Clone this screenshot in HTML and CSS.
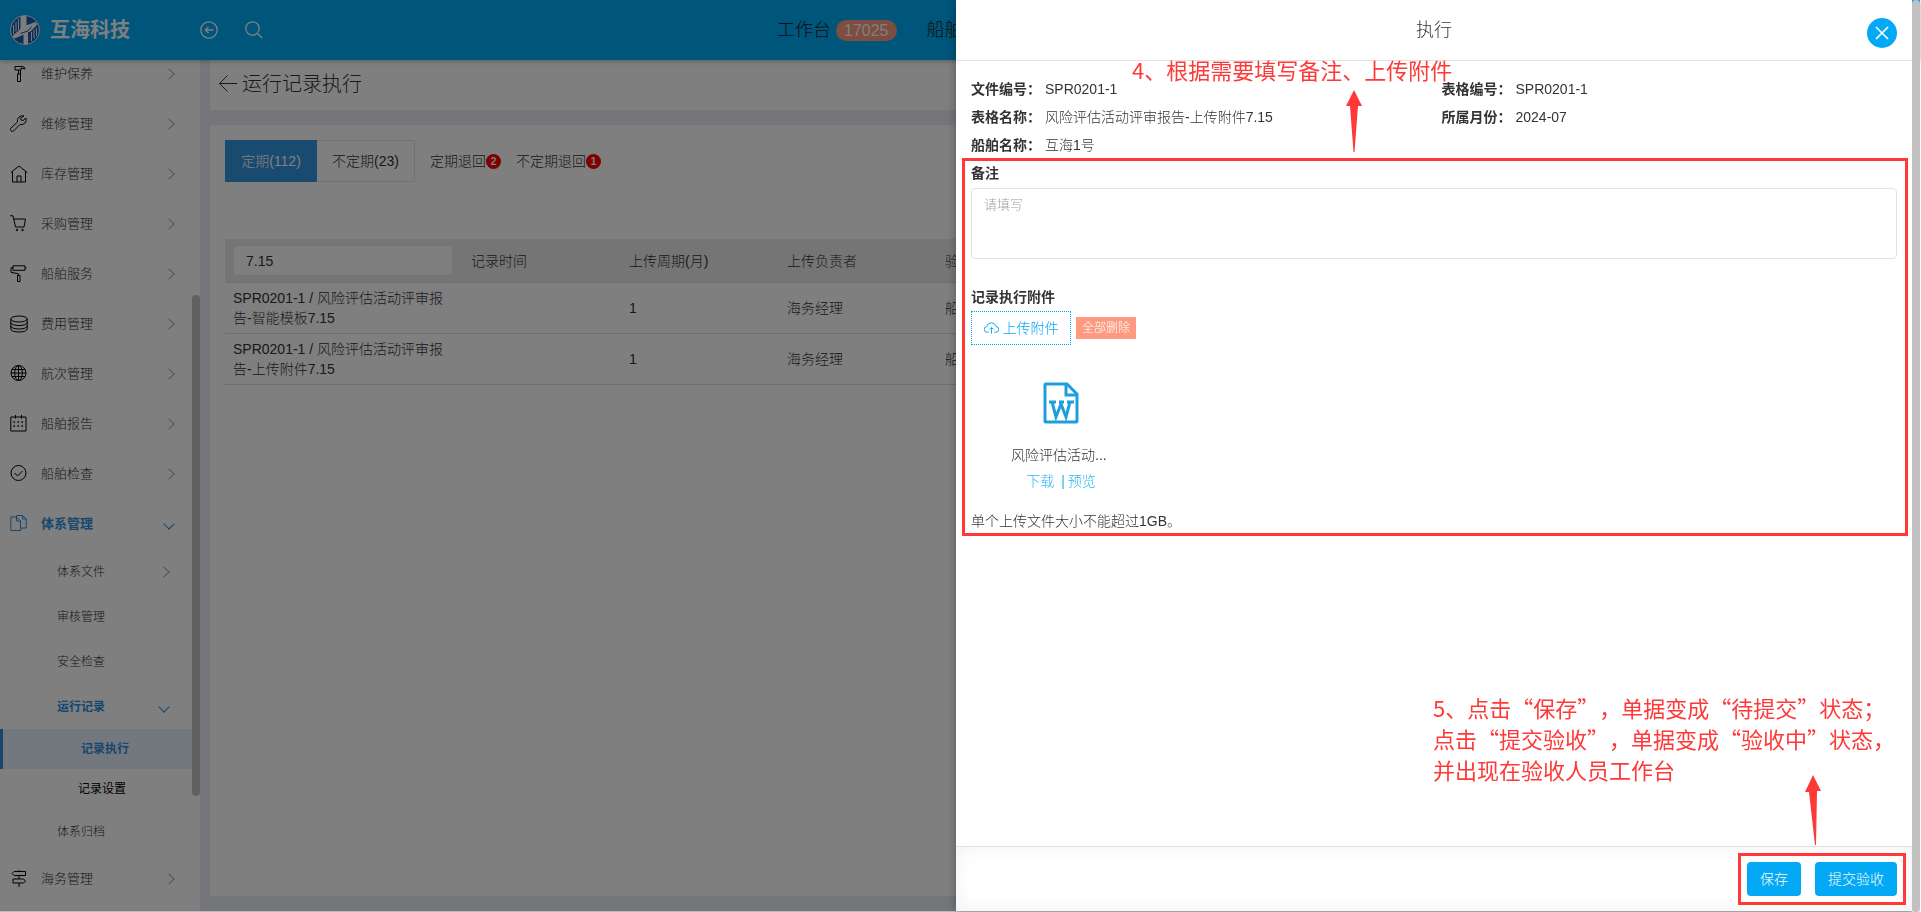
FILE: index.html
```html
<!DOCTYPE html>
<html lang="zh-CN">
<head>
<meta charset="utf-8">
<title>运行记录执行</title>
<link rel="stylesheet" href="styles.css">
</head>
<body>
<div class="app">
  <header class="topbar">
    <div class="brand">
      <svg class="brand-logo" viewBox="0 0 30 30" aria-hidden="true">
        <circle cx="15" cy="15" r="14.500" fill="#1c5cae" stroke="#e8f0f8"/>
        <path d="M11 1.500h5V11l9.500-3.500 1.500 2-7 7h-2.500V28.500H14V19l-9.500 4-1.500-2 8-7z" fill="#f4f8fc"/>
        <path d="M3.500 10v9M6 7v9.500M8.500 4v11M21.500 17v9M24 15v8.500M26.500 13v8" stroke="#e8f0f8"/>
        <path d="M10.500 18.500l7.500-2.500 3.500-4.500" stroke="#1c5cae"/>
      </svg>
      <span class="brand-name">互海科技</span>
    </div>
    <button class="icon-btn" aria-label="返回">
      <svg viewBox="0 0 18 18"><circle cx="9" cy="9" r="8.200"/><path d="M13.500 9h-8M8.500 6l-3.200 3 3.200 3"/></svg>
    </button>
    <button class="icon-btn" aria-label="搜索">
      <svg viewBox="0 0 18 18"><circle cx="7.500" cy="7.500" r="6.700"/><path d="M12.300 12.300l5 5"/></svg>
    </button>
    <nav class="topnav">
      <a href="#">工作台 <span class="count">17025</span></a>
      <a href="#">船舶</a>
    </nav>
  </header>

  <div class="workspace">
    <aside class="sidebar">
      <ul class="menu">
        <li><a href="#"><svg viewBox="0 0 18 18"><path d="M5 1.500h7.500q2 0 2.500 2.500l-4-1v2H5zM8.500 5v4M10.500 5v4M7.500 9h3v7.500h-3z"/></svg>维护保养<i class="arrow"></i></a></li>
        <li><a href="#"><svg viewBox="0 0 18 18"><path d="M14 1A5 5 0 0 0 7.500 7L1 13a1.800 1.800 0 0 0 0 2.800q1.500 1.200 2.800 0L10 9.500A5 5 0 0 0 16 3L13 5.500l-2-.5-.5-2z"/></svg>维修管理<i class="arrow"></i></a></li>
        <li><a href="#"><svg viewBox="0 0 18 18"><path d="M.8 7.500L9 1l8.200 6.500M2.500 6.500v10.500h13V6.500M7 17v-6h4v6"/></svg>库存管理<i class="arrow"></i></a></li>
        <li><a href="#"><svg viewBox="0 0 18 18"><path d="M0 .8h3L5.500 12h8.500l1.500-8H3.800"/><circle cx="7" cy="15" r=".8"/><circle cx="12.500" cy="15" r=".8"/></svg>采购管理<i class="arrow"></i></a></li>
        <li><a href="#"><svg viewBox="0 0 18 18"><path d="M3 .8h12v4.500H3zM15 2.800h1.500M3 2.800H1v4.500l7.500 1.500v2M7.500 10.500h2.500v6H7.500z"/></svg>船舶服务<i class="arrow"></i></a></li>
        <li><a href="#"><svg viewBox="0 0 18 18"><ellipse cx="9" cy="4" rx="8.200" ry="3"/><path d="M.8 4v10c0 4 16.400 4 16.400 0V4M.8 7.500c0 4 16.400 4 16.400 0M.8 11c0 4 16.400 4 16.400 0"/></svg>费用管理<i class="arrow"></i></a></li>
        <li><a href="#"><svg viewBox="0 0 18 18"><circle cx="8.500" cy="8" r="7.500"/><ellipse cx="8.500" cy="8" rx="3.800" ry="7.500"/><path d="M8.500.5v15M1 8h15M2 4.500h13M2 11.500h13"/></svg>航次管理<i class="arrow"></i></a></li>
        <li><a href="#"><svg viewBox="0 0 18 18"><path d="M.8 2h15.200v14H.8zM5.500 0v3.500M11.500 0v3.500"/><path class="dots" d="M3.500 7H5M7.500 7H9M11.500 7H13M3.500 11H5M7.500 11H9M11.500 11H13"/></svg>船舶报告<i class="arrow"></i></a></li>
        <li><a href="#"><svg viewBox="0 0 18 18"><circle cx="8.500" cy="8" r="7.500"/><path d="M4.500 8l3 3 5-5"/></svg>船舶检查<i class="arrow"></i></a></li>
        <li><a href="#" class="open"><svg viewBox="0 0 18 18"><path d="M6.500 2h-5.700v13.500h10v-2.500M6.500 2l4 4v7h5.700V4L12.500.5H6.500zM6.500 2V6h4M12.500.5V4h3.700"/></svg>体系管理<i class="arrow"></i></a>
          <ul class="submenu">
            <li><a href="#">体系文件<i class="arrow"></i></a></li>
            <li><a href="#">审核管理</a></li>
            <li><a href="#">安全检查</a></li>
            <li><a href="#" class="open">运行记录<i class="arrow"></i></a>
              <ul class="leafmenu">
                <li><a href="#" class="current">记录执行</a></li>
                <li><a href="#">记录设置</a></li>
              </ul>
            </li>
            <li><a href="#">体系归档</a></li>
          </ul>
        </li>
        <li><a href="#"><svg viewBox="0 0 18 18"><path d="M4 1.500h11.500v4H4l-2-2zM3 9h10.500l2 2-2 2H3zM9 0v1.500M9 5.500V9M9 13v4"/></svg>海务管理<i class="arrow"></i></a></li>
      </ul>
      <div class="menu-scroll"></div>
    </aside>

    <main class="content">
      <div class="panel page-head">
        <svg viewBox="0 0 20 18" aria-hidden="true"><path d="M19 8.500H1.500M9.500.5l-8 8 8 8"/></svg>
        <h1>运行记录执行</h1>
      </div>
      <div class="panel records">
        <div class="tabs">
          <button class="tab active">定期(112)</button>
          <button class="tab boxed">不定期(23)</button>
          <button class="tab plain">定期退回<span class="dot">2</span></button>
          <button class="tab plain">不定期退回<span class="dot">1</span></button>
        </div>
        <table class="grid">
          <colgroup><col class="c-name"><col class="c"><col class="c"><col class="c"><col></colgroup>
          <thead><tr><th><input type="text" value="7.15" aria-label="表格名称"></th><th>记录时间</th><th>上传周期(月)</th><th>上传负责者</th><th>验收负责者</th></tr></thead>
          <tbody>
            <tr><td>SPR0201-1 / 风险评估活动评审报告-智能模板7.15</td><td></td><td>1</td><td>海务经理</td><td>船长</td></tr>
            <tr><td>SPR0201-1 / 风险评估活动评审报告-上传附件7.15</td><td></td><td>1</td><td>海务经理</td><td>船长</td></tr>
          </tbody>
        </table>
      </div>
    </main>
  </div>
</div>

<div class="overlay">
  <div class="mask">
    <section class="drawer" role="dialog" aria-labelledby="drawer-title">
      <header class="drawer-head">
        <h2 id="drawer-title">执行</h2>
        <button class="close" aria-label="关闭"><svg viewBox="0 0 14 14"><path d="M1 1l12 12M13 1L1 13"/></svg></button>
      </header>
      <div class="drawer-body">
        <dl class="facts">
          <div><dt>文件编号：</dt><dd>SPR0201-1</dd></div>
          <div><dt>表格编号：</dt><dd>SPR0201-1</dd></div>
          <div><dt>表格名称：</dt><dd>风险评估活动评审报告-上传附件7.15</dd></div>
          <div><dt>所属月份：</dt><dd>2024-07</dd></div>
          <div><dt>船舶名称：</dt><dd>互海1号</dd></div>
        </dl>
        <div class="form">
          <label class="field-label" for="remark">备注</label>
          <textarea id="remark" placeholder="请填写"></textarea>
          <div class="field-label">记录执行附件</div>
          <div class="upload-row">
            <button class="upload"><svg viewBox="0 0 16 14"><path d="M5 11.500H3.500a3 3 0 0 1-.5-6 5 5 0 0 1 9.800 0 3 3 0 0 1 0 6H11M8 13V6.500M6 8.500l2-2 2 2"/></svg>上传附件</button>
            <button class="remove">全部删除</button>
          </div>
          <div class="file">
            <svg viewBox="0 0 36 42" aria-hidden="true"><path d="M3 2h21l10 10v27q0 1-1 1H3q-1 0-1-1V3q0-1 1-1z"/><path d="M23 2v11h11"/><path d="M6 20h7M16 20h5M24 20h7M9 20l4 15 5-13 5 13 4-15"/></svg>
            <span class="file-name">风险评估活动...</span>
            <span class="file-links"><a href="#">下载</a><span class="bar">|</span><a href="#">预览</a></span>
          </div>
          <p class="hint">单个上传文件大小不能超过1GB。</p>
        </div>
        <p class="note note-form">4、根据需要填写备注、上传附件</p>
        <svg class="pointer pointer-form" viewBox="0 0 18 64"><path d="M9 0l8 16h-4L9.500 62h-1L5 16H1z"/></svg>
        <p class="note note-save">5、点击“保存”，单据变成“待提交”状态；<br>点击“提交验收”，单据变成“验收中”状态，<br>并出现在验收人员工作台</p>
        <svg class="pointer pointer-save" viewBox="0 0 18 71"><path d="M9 0l8 16h-4l-1 54h-1L5 17H1z"/></svg>
      </div>
      <footer class="drawer-foot">
        <div class="actions">
          <button class="primary">保存</button>
          <button class="primary">提交验收</button>
        </div>
      </footer>
    </section>
  </div>
  <div class="page-scroll"></div>
</div>
</body>
</html>
```
FILE: styles.css
```css
* { box-sizing: border-box; }
html, body { height: 100%; }
body {
  margin: 0;
  overflow: hidden;
  color: #333;
  background: #fff;
  font: 14px/20px "Liberation Sans", Arial, "Noto Sans CJK SC", sans-serif;
  font-weight: 300;
}
ul, dl, dd, p, h1, h2 { margin: 0; padding: 0; }
ul { list-style: none; }
a { color: inherit; text-decoration: none; }
button, input, textarea { font: inherit; color: inherit; }
button { padding: 0; border: 0; background: none; cursor: pointer; }
svg { fill: none; stroke: currentColor; flex: none; }

.app {
  display: flex;
  flex-direction: column;
  height: 100vh;
  padding-right: 1px;
  overflow: hidden;
}

/* Top bar */
.topbar {
  display: flex;
  align-items: center;
  flex: none;
  height: 60px;
  padding: 0 10px;
  color: #fff;
  background: #00abf5;
  box-shadow: 0 1px 5px rgba(0, 0, 0, .3);
  z-index: 1;
}
.brand { display: flex; align-items: center; gap: 10px; width: 190px; }
.brand-logo { width: 30px; height: 30px; }
.brand-name { font-size: 20px; font-weight: 700; }
.icon-btn { width: 18px; height: 18px; margin-right: 27px; }
.icon-btn svg { display: block; width: 18px; height: 18px; stroke-width: 1.3; }
.topnav {
  display: flex;
  gap: 30px;
  margin-left: 487px;
  color: #222;
  font-size: 18px;
  white-space: nowrap;
}
.topnav a { display: flex; align-items: center; gap: 5px; }
.count {
  padding: 0 8px;
  border-radius: 11px;
  color: #fff;
  background: #fd9a80;
  font-size: 16px;
  line-height: 21px;
}

/* Side menu */
.workspace { display: flex; flex: 1; min-height: 0; }
.sidebar { display: flex; width: 200px; flex: none; overflow: hidden; background: #fff; }
.menu { flex: 1; margin-top: -11px; font-size: 13px; }
.menu a {
  display: flex;
  align-items: center;
  gap: 13px;
  height: 50px;
  padding: 0 19px 0 10px;
}
.menu a svg { width: 18px; height: 18px; color: #000; }
.menu .dots { stroke-width: 1.6; }
.arrow {
  width: 8px;
  height: 8px;
  margin-left: auto;
  border: solid #a4a8ae;
  border-width: 1px 1px 0 0;
  transform: rotate(45deg);
}
.menu a.open, .menu a.open svg { color: #2f8fdc; }
.menu a.open { font-weight: 700; }
.menu .open .arrow { border-color: #2f8fdc; transform: rotate(135deg); }
.submenu { font-size: 12px; }
.submenu a { height: 45px; padding: 0 24px 0 57px; }
.submenu .leafmenu a { height: 40px; padding: 0 23px 0 78px; color: #000; font-weight: 400; }
.submenu .leafmenu a.current {
  border-left: 3px solid #2f8fdc;
  color: #2f8fdc;
  background: #e6f0ff;
  font-weight: 700;
}
.menu-scroll {
  width: 8px;
  height: 501px;
  margin-top: 235px;
  border-radius: 4px;
  background: #c1c1c1;
}

/* Main content */
.content {
  display: flex;
  flex-direction: column;
  gap: 15px;
  flex: 1;
  padding: 0 10px 16px;
  background: #e9edf3;
}
.panel { background: #fff; }
.page-head { display: flex; align-items: center; gap: 4px; height: 50px; padding: 0 8px 2px; }
.page-head svg { width: 20px; height: 18px; }
.page-head h1 { font-size: 20px; font-weight: 300; }
.records { flex: 1; padding: 15px; }
.tabs { display: flex; height: 42px; margin-bottom: 57px; }
.tab.active { width: 92px; color: #fff; background: #3296e0; }
.tab.boxed { width: 98px; border: 1px solid #e3e6ea; border-left: 0; }
.tab.plain { display: flex; align-items: center; margin-left: 15px; }
.dot {
  width: 15px;
  height: 15px;
  border-radius: 50%;
  color: #fff;
  background: #f00;
  font-size: 10px;
  font-weight: 700;
  line-height: 15px;
}
.grid { width: 100%; table-layout: fixed; border-collapse: separate; border-spacing: 0; }
.c-name { width: 238px; }
.c { width: 158px; }
.grid th, .grid td { padding: 0 8px; border-bottom: 1px solid #dcdfe6; text-align: left; }
.grid th { height: 44px; background: #ebebeb; font-weight: 300; }
.grid td { height: 51px; }
.grid input {
  display: block;
  width: 220px;
  height: 31px;
  padding: 0 12px;
  border: 1px solid #e6e6e6;
  border-radius: 4px;
  background: #fff;
}

/* Drawer */
.overlay { position: fixed; inset: 0 1px 0 0; z-index: 10; display: flex; }
.mask {
  display: flex;
  justify-content: flex-end;
  flex: 1;
  border-bottom: 1px solid #b4bfc3;
  background: rgba(0, 0, 0, .5);
}
.page-scroll { width: 8px; border-radius: 4px; background: #c1c1c1; }
.drawer {
  display: flex;
  flex-direction: column;
  width: 50%;
  background: #fff;
  box-shadow: 0 0 10px rgba(0, 0, 0, .3);
}
.drawer-head {
  display: flex;
  align-items: center;
  height: 61px;
  padding: 0 15px;
  border-bottom: 1px solid #e2e2e2;
}
.drawer-head h2 { flex: 1; padding-left: 30px; font-size: 18px; font-weight: 300; text-align: center; }
.close {
  display: grid;
  place-items: center;
  width: 30px;
  height: 30px;
  margin-top: 5px;
  border-radius: 50%;
  color: #fff;
  background: #03a9f4;
}
.close svg { width: 14px; height: 14px; stroke-width: 1.6; }
.drawer-body { position: relative; flex: 1; padding: 14px 15px; }
.facts { display: grid; grid-template-columns: 1fr 1fr; margin-right: -15px; line-height: 28px; }
.facts div { display: flex; }
.facts dt { width: 74px; font-weight: 700; }
.form { position: relative; }
.form::before {
  content: "";
  position: absolute;
  inset: -1px -11px -2px -9px;
  border: 3px solid #ff3838;
  pointer-events: none;
}
.field-label { display: block; line-height: 28px; font-weight: 700; }
textarea {
  display: block;
  width: 100%;
  height: 71px;
  margin: 1px 0 24px;
  padding: 6px 12px;
  border: 1px solid #e2e2e2;
  border-radius: 4px;
  font-size: 13px;
  resize: none;
}
textarea::placeholder { color: #a0a0a0; }
.upload-row { display: flex; align-items: center; gap: 5px; }
.upload {
  display: flex;
  align-items: center;
  justify-content: center;
  gap: 4px;
  width: 100px;
  height: 34px;
  border: 1px dotted #03a9f4;
  color: #03a9f4;
}
.upload svg { width: 15px; height: 14px; }
.remove { width: 60px; height: 22px; color: #fff; background: #fd9a80; font-size: 12px; }
.file {
  display: flex;
  flex-direction: column;
  align-items: center;
  width: 180px;
  padding-top: 37px;
}
.file svg { width: 36px; height: 42px; color: #1e9fdd; stroke-width: 3; }
.file-name { width: 100px; margin-top: 18px; line-height: 26px; white-space: nowrap; }
.file-links { display: flex; line-height: 26px; color: #29b6f6; }
.bar { margin: 0 3px 0 7px; }
.hint { margin-top: 14px; line-height: 26px; }

.drawer-foot {
  display: flex;
  align-items: center;
  justify-content: flex-end;
  height: 65px;
  padding: 0 6px 1px;
  border-top: 1px solid #e2e2e2;
  box-shadow: inset 0 0 20px rgba(0, 0, 0, .06);
}
.actions { display: flex; gap: 14px; padding: 6px; border: 3px solid #ff3838; }
.primary {
  height: 34px;
  padding: 0 13px;
  border-radius: 4px;
  color: #fff;
  background: #03a9f4;
}

/* Guide notes */
.note {
  position: absolute;
  color: #ff3838;
  font: 22px/31px "Noto Sans CJK SC", sans-serif;
  text-spacing-trim: space-all;
  white-space: nowrap;
}
.note-form { top: -7px; left: 176px; }
.note-save { right: 17px; bottom: 61px; }
.pointer { position: absolute; fill: #ff3838; stroke: none; }
.pointer-form { top: 29px; left: 389px; width: 18px; height: 64px; }
.pointer-save { right: 90px; bottom: 0; width: 18px; height: 71px; }
```
